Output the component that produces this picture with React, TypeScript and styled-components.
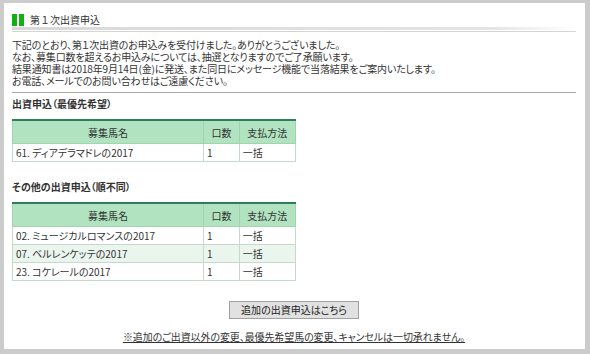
import React from 'react';
import styled, { createGlobalStyle } from 'styled-components';

const FONT = '"Noto Sans CJK JP", "Noto Sans", sans-serif';

const GlobalStyle = createGlobalStyle`
  html, body {
    margin: 0;
    padding: 0;
    background: #cccccc;
  }
  body {
    font-family: ${FONT};
    color: #333333;
  }
`;

const StyledPanel = styled.div`
  background: #ffffff;
  box-sizing: border-box;
  height: 346px;
  margin: 3px 5px 0 4px;
  padding: 10px 9px 0 8px;
`;

const StyledTitleRow = styled.div`
  align-items: center;
  display: flex;
  gap: 6px;
  height: 13px;
`;

const StyledBars = styled.span`
  display: flex;
  gap: 2px;

  &::before,
  &::after {
    background: #12b012;
    content: '';
    display: block;
    height: 12px;
    width: 5px;
  }
`;

const StyledTitleText = styled.h2`
  font-size: 10px;
  font-weight: 400;
  line-height: 13px;
  margin: 0;
`;

const StyledTitleRule = styled.div`
  border-bottom: 1px solid #d4d4d4;
  margin-top: 1px;
  padding-bottom: 1px;

  &::before {
    background: linear-gradient(to right, #d8d8d8, #e4e4e4 85%, #ffffff);
    content: '';
    display: block;
    height: 3px;
  }
`;

const StyledIntro = styled.p`
  font-size: 10px;
  font-feature-settings: 'palt';
  letter-spacing: -0.15px;
  line-height: 12px;
  margin: 7px 0 0;
`;

const StyledDivider = styled.hr`
  border: 0;
  border-top: 1px solid #a8a8a8;
  margin: 5px 0 0;
`;

const StyledSectionTitle = styled.h3<{ $top: number }>`
  font-size: 10px;
  font-feature-settings: 'palt';
  font-weight: 700;
  line-height: 12px;
  margin: ${({ $top }) => $top}px 0 0;
`;

const StyledTable = styled.table`
  border-collapse: collapse;
  border-top: 2px solid #2f7d5c;
  font-size: 10px;
  font-feature-settings: 'palt';
  margin-top: 9px;
  width: 284px;
`;

const StyledHeadCell = styled.th<{ $width: number }>`
  background: #b1e3c0;
  border: 1px solid #a2d4b2;
  border-top: 0;
  font-weight: 400;
  height: 22px;
  padding: 0;
  text-align: center;
  width: ${({ $width }) => $width}px;
`;

const StyledRow = styled.tr<{ $alt?: boolean }>`
  background: ${({ $alt }) => ($alt ? '#eaf5ee' : '#ffffff')};
`;

const StyledCell = styled.td`
  border: 1px solid #c7d9cd;
  height: 17px;
  line-height: 17px;
  padding: 0 3px;
`;

const StyledActions = styled.div`
  display: flex;
  flex-direction: column;
  align-items: center;
  margin-top: 20px;
`;

const StyledButton = styled.button`
  background: #e1e1e1;
  border: 1px solid #a0a0a0;
  color: #222222;
  font-family: ${FONT};
  font-feature-settings: 'palt';
  font-size: 10px;
  height: 18px;
  line-height: 16px;
  padding: 0;
  width: 130px;
`;

const StyledNotice = styled.a`
  color: #333333;
  font-size: 10px;
  font-feature-settings: 'palt';
  letter-spacing: -0.1px;
  line-height: 12px;
  margin-top: 12px;
  text-decoration: underline;
`;

interface Entry {
  name: string;
  units: number;
  payment: string;
}

const FIRST_CHOICE: Entry[] = [
  { name: '61. ディアデラマドレの2017', units: 1, payment: '一括' },
];

const OTHERS: Entry[] = [
  { name: '02. ミュージカルロマンスの2017', units: 1, payment: '一括' },
  { name: '07. ベルレンケッテの2017', units: 1, payment: '一括' },
  { name: '23. コケレールの2017', units: 1, payment: '一括' },
];

const EntryTable: React.FC<{ entries: Entry[] }> = ({ entries }) => (
  <StyledTable>
    <thead>
      <tr>
        <StyledHeadCell $width={193}>募集馬名</StyledHeadCell>
        <StyledHeadCell $width={35}>口数</StyledHeadCell>
        <StyledHeadCell $width={56}>支払方法</StyledHeadCell>
      </tr>
    </thead>
    <tbody>
      {entries.map((entry, i) => (
        <StyledRow key={entry.name} $alt={i % 2 === 1}>
          <StyledCell>{entry.name}</StyledCell>
          <StyledCell>{entry.units}</StyledCell>
          <StyledCell>{entry.payment}</StyledCell>
        </StyledRow>
      ))}
    </tbody>
  </StyledTable>
);

const App: React.FC = () => {
  return (
    <>
      <GlobalStyle />
      <StyledPanel>
        <StyledTitleRow>
          <StyledBars />
          <StyledTitleText>第１次出資申込</StyledTitleText>
        </StyledTitleRow>
        <StyledTitleRule />
        <StyledIntro>
          下記のとおり、第１次出資のお申込みを受付けました。ありがとうございました。
          <br />
          なお、募集口数を超えるお申込みについては、抽選となりますのでご了承願います。
          <br />
          結果通知書は2018年9月14日(金)に発送、また同日にメッセージ機能で当落結果をご案内いたします。
          <br />
          お電話、メールでのお問い合わせはご遠慮ください。
        </StyledIntro>
        <StyledDivider />
        <StyledSectionTitle $top={5}>出資申込（最優先希望）</StyledSectionTitle>
        <EntryTable entries={FIRST_CHOICE} />
        <StyledSectionTitle $top={19}>その他の出資申込（順不同）</StyledSectionTitle>
        <EntryTable entries={OTHERS} />
        <StyledActions>
          <StyledButton type="button">追加の出資申込はこちら</StyledButton>
          <StyledNotice href="#">
            ※追加のご出資以外の変更、最優先希望馬の変更、キャンセルは一切承れません。
          </StyledNotice>
        </StyledActions>
      </StyledPanel>
    </>
  );
};

export default App;
